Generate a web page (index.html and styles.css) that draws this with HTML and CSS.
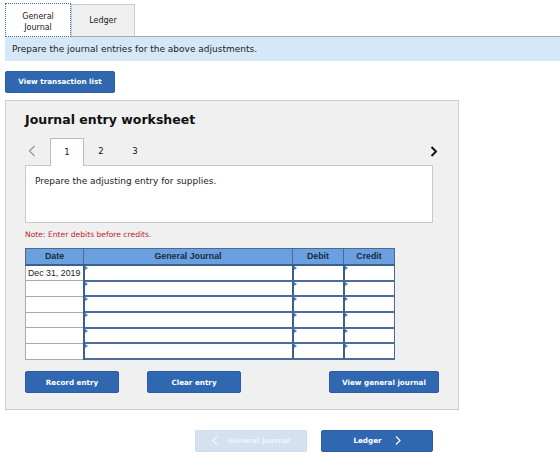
FILE: index.html
```html
<!DOCTYPE html>
<html>
<head>
<meta charset="utf-8">
<link rel="stylesheet" href="styles.css">
</head>
<body>
<div class="page">
  <div class="tabs">
    <div class="tab tab-active">General<br>Journal</div>
    <div class="tab tab-ledger">Ledger</div>
  </div>
  <div class="banner">Prepare the journal entries for the above adjustments.</div>
  <div class="btn-row-top">
    <button class="btn btn-list">View transaction list</button>
  </div>
  <div class="panel">
    <h2 class="title">Journal entry worksheet</h2>
    <div class="stepnav">
      <span class="arrow arrow-left"><svg width="8" height="12" viewBox="0 0 8 12"><path d="M6.5 1 L1.5 6 L6.5 11" fill="none" stroke="#999" stroke-width="1.3"/></svg></span>
      <span class="step step-active">1</span>
      <span class="step">2</span>
      <span class="step">3</span>
      <span class="arrow arrow-right"><svg width="8" height="11" viewBox="0 0 8 11"><path d="M1.5 1 L6 5.5 L1.5 10" fill="none" stroke="#111" stroke-width="2"/></svg></span>
    </div>
    <div class="prompt">Prepare the adjusting entry for supplies.</div>
    <div class="note">Note: Enter debits before credits.</div>
    <table class="jtable">
      <thead>
        <tr><th class="c-date">Date</th><th class="c-gj">General Journal</th><th class="c-num">Debit</th><th class="c-num">Credit</th></tr>
      </thead>
      <tbody>
        <tr><td class="date">Dec 31, 2019</td><td class="in"></td><td class="in"></td><td class="in"></td></tr>
        <tr><td class="date"></td><td class="in"></td><td class="in"></td><td class="in"></td></tr>
        <tr><td class="date"></td><td class="in"></td><td class="in"></td><td class="in"></td></tr>
        <tr><td class="date"></td><td class="in"></td><td class="in"></td><td class="in"></td></tr>
        <tr><td class="date"></td><td class="in"></td><td class="in"></td><td class="in"></td></tr>
        <tr><td class="date"></td><td class="in"></td><td class="in"></td><td class="in"></td></tr>
      </tbody>
    </table>
    <div class="actions">
      <button class="btn btn-act">Record entry</button>
      <button class="btn btn-act btn-clear">Clear entry</button>
      <button class="btn btn-view">View general journal</button>
    </div>
  </div>
  <div class="bottomnav">
    <button class="btn btn-nav btn-disabled"><svg class="chev" width="6" height="9" viewBox="0 0 6 9"><path d="M5 0.5 L1 4.5 L5 8.5" fill="none" stroke="#eef4fb" stroke-width="1.2"/></svg>General Journal</button>
    <button class="btn btn-nav">Ledger<svg class="chev chev-r" width="6" height="9" viewBox="0 0 6 9"><path d="M1 0.5 L5 4.5 L1 8.5" fill="none" stroke="#fff" stroke-width="1.2"/></svg></button>
  </div>
</div>
</body>
</html>
```

FILE: styles.css
```css
* { box-sizing: border-box; }
body {
  margin: 0;
  font-family: "DejaVu Sans", Verdana, sans-serif;
  color: #222;
  background: #fff;
}
.page {
  padding: 4px 0 0 5px;
  width: 560px;
}
.tabs {
  display: flex;
  align-items: flex-end;
  height: 33px;
  border-bottom: 1px solid #aaa;
}
.tab {
  font-size: 8px;
  line-height: 11px;
  text-align: center;
  display: flex;
  align-items: center;
  justify-content: center;
}
.tab-active {
  width: 66px;
  height: 34px;
  margin-bottom: -1px;
  background: #fff;
  border: 1px dotted #3a6fc4;
  padding-top: 3px;
}
.tab-ledger {
  width: 64px;
  height: 32px;
  background: #efefef;
  border: 1px solid #ccc;
  border-bottom: none;
}
.banner {
  height: 24px;
  background: #d5e8f7;
  font-size: 9px;
  padding-left: 7px;
  display: flex;
  align-items: center;
  color: #222;
}
.btn-row-top {
  margin-top: 8px;
}
.btn {
  font-family: "DejaVu Sans", Verdana, sans-serif;
  font-weight: bold;
  color: #fff;
  background: #2f68b1;
  border: 1px solid #2a5ea3;
  border-radius: 2px;
  font-size: 7.2px;
  height: 22px;
  padding: 0;
  cursor: pointer;
}
.btn-list {
  width: 110px;
}
.panel {
  margin-top: 7px;
  width: 454px;
  height: 310px;
  background: #f0f0f0;
  border: 1px solid #ccc;
  padding: 0 0 0 19px;
}
.title {
  margin: 11px 0 0 0;
  font-size: 12.5px;
  font-weight: bold;
  color: #111;
  line-height: 16px;
}
.stepnav {
  margin-top: 10px;
  display: flex;
  align-items: flex-end;
  height: 27px;
  width: 408px;
}
.arrow {
  align-self: center;
  display: flex;
}
.arrow-left {
  margin-left: 3px;
  width: 22px;
}
.arrow-right {
  margin-left: auto;
  margin-right: -5px;
}
.step {
  font-size: 8.5px;
  width: 34px;
  height: 27px;
  display: flex;
  align-items: center;
  justify-content: center;
  color: #111;
}
.step-active {
  background: #fff;
  border: 1px solid #bbb;
  border-bottom: none;
  height: 28px;
  margin-bottom: -1px;
  position: relative;
  z-index: 1;
}
.prompt {
  width: 408px;
  height: 58px;
  background: #fff;
  border: 1px solid #c8c8c8;
  font-size: 9px;
  padding: 10px 0 0 9px;
  color: #222;
}
.note {
  margin-top: 6px;
  font-size: 7.6px;
  color: #c0262d;
  height: 12px;
  line-height: 12px;
}
.jtable {
  margin-top: 7px;
  border-collapse: collapse;
  width: 370px;
  font-family: "Liberation Sans", Arial, sans-serif;
  border: 1px solid #5b6f8a;
}
.jtable th {
  background: #6aa0e0;
  color: #1c2a3c;
  font-size: 8.8px;
  font-weight: bold;
  height: 17px;
  padding: 0;
  border: 1px solid #4b6a92;
  border-bottom: 2px solid #3f5f88;
}
.c-date { width: 58px; }
.c-num { width: 51px; }
.jtable td {
  height: 15.7px;
  padding: 0;
  background: #fff;
}
.jtable td.date {
  font-size: 8.8px;
  color: #222;
  padding-left: 2px;
  border: 1px solid #aaa;
  border-right: 2px solid #3f5f88;
  white-space: nowrap;
}
.jtable td.in {
  border-left: 2px solid #3f5f88;
  border-right: 1px solid #4b6a92;
  border-bottom: 2px solid #4b6d9b;
  position: relative;
}
.jtable td.in::before {
  content: "";
  position: absolute;
  top: 0;
  left: 0;
  border-top: 2px solid transparent;
  border-bottom: 2px solid transparent;
  border-left: 3px solid #3b7fd6;
}
.actions {
  margin-top: 11px;
  display: flex;
  width: 414px;
}
.btn-act {
  width: 94px;
}
.btn-clear {
  margin-left: 28px;
}
.btn-view {
  width: 110px;
  margin-left: auto;
}
.bottomnav {
  margin-top: 20px;
  display: flex;
  padding-left: 190px;
  gap: 14px;
}
.btn-nav {
  width: 112px;
  height: 22px;
  display: flex;
  align-items: center;
  justify-content: center;
}
.btn-disabled {
  background: #d3e1f1;
  border-color: #cfdcee;
  color: #eef4fb;
}
.chev {
  margin-right: 10px;
}
.chev-r {
  margin-right: 0;
  margin-left: 13px;
}
```
